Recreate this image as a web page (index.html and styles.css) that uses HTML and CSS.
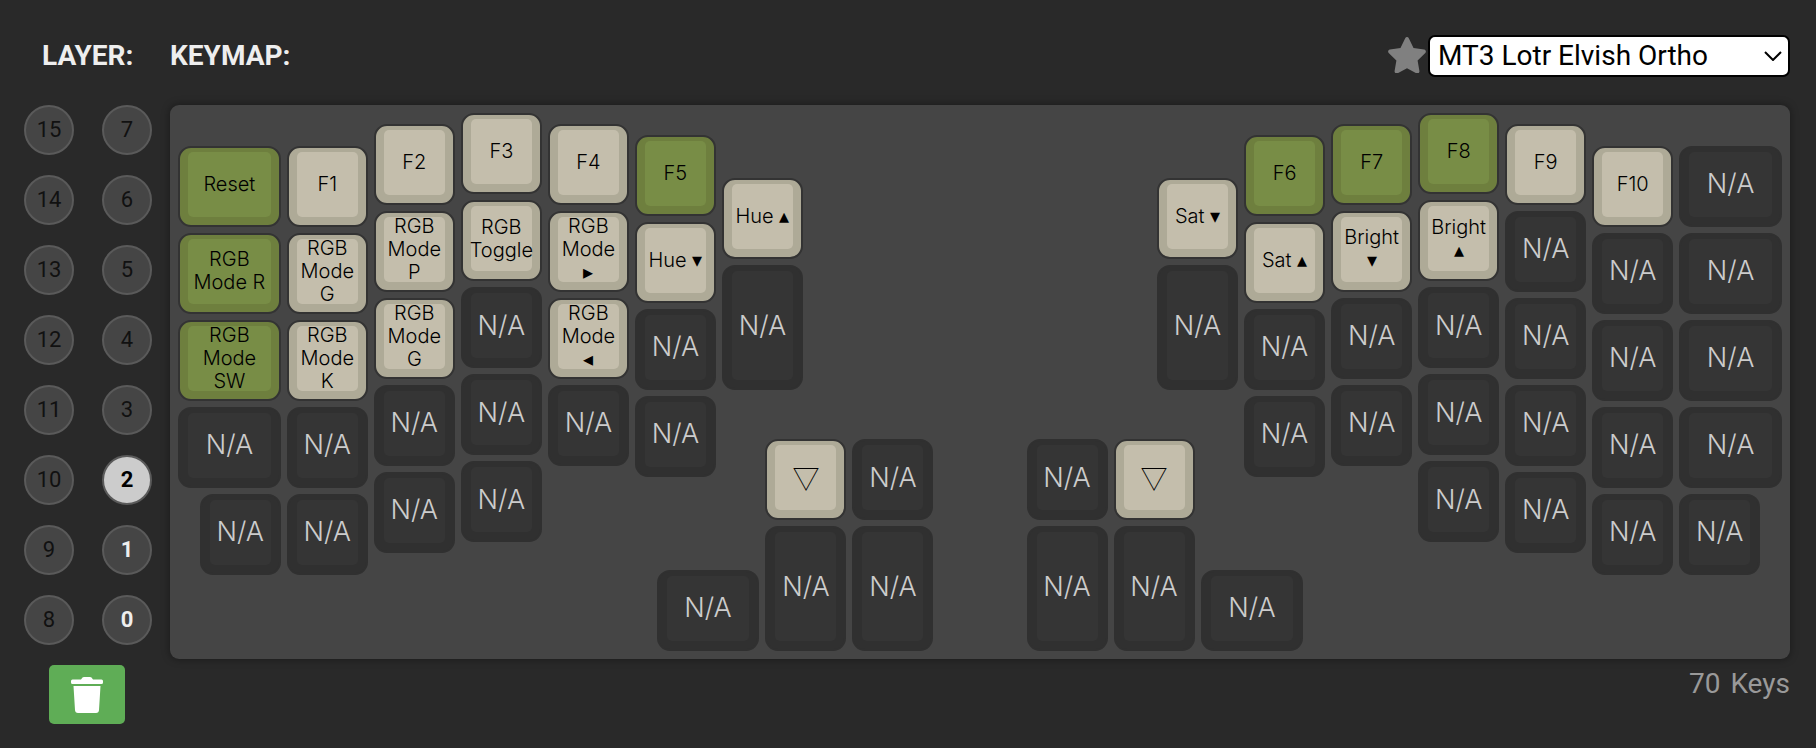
FILE: index.html
```html
<!DOCTYPE html>
<html lang="en">
<head>
<meta charset="utf-8">
<title>Keymap</title>
<link rel="stylesheet" href="styles.css">
</head>
<body>
<main class="configurator">
  <h2 class="title title-layer">Layer:</h2>
  <header class="keymap-head">
    <h2 class="title">Keymap:</h2>
    <div class="picker">
      <button class="favorite" type="button" aria-label="Favorite colorway">
        <svg viewBox="0 0 38 36" aria-hidden="true"><path d="M17.2 1.2c.7-1.500 2.900-1.500 3.600 0l4.700 9.700 10.600 1.600c1.700.3 2.400 2.300 1.200 3.500l-7.700 7.600 1.800 10.500c.3 1.700-1.500 2.900-3 2.200L19 31.300l-9.400 5c-1.500.7-3.300-.5-3-2.200l1.800-10.500L.700 16c-1.200-1.200-.5-3.200 1.200-3.500l10.600-1.600z"/></svg>
      </button>
      <div class="select-box">
        <select class="colorway" aria-label="Colorway">
          <option>MT3 Lotr Elvish Ortho</option>
        </select>
        <svg class="chevron" viewBox="0 0 18 10" aria-hidden="true"><path d="M1 1l8 8 8-8"/></svg>
      </div>
    </div>
  </header>

  <aside class="layers">
    <div class="layer-grid">
      <button type="button" class="layer">15</button><button type="button" class="layer">7</button>
      <button type="button" class="layer">14</button><button type="button" class="layer">6</button>
      <button type="button" class="layer">13</button><button type="button" class="layer">5</button>
      <button type="button" class="layer">12</button><button type="button" class="layer">4</button>
      <button type="button" class="layer">11</button><button type="button" class="layer">3</button>
      <button type="button" class="layer">10</button><button type="button" class="layer active">2</button>
      <button type="button" class="layer">9</button><button type="button" class="layer used">1</button>
      <button type="button" class="layer">8</button><button type="button" class="layer used">0</button>
    </div>
    <button class="clear" type="button" aria-label="Clear layer">
      <svg viewBox="0 0 32 36" aria-hidden="true"><path d="M1.500 2.500H10L11.500.500Q12 0 13 0h6q1 0 1.500.500L22 2.500h8.500Q32 2.500 32 4v1.500Q32 7 30.500 7h-29Q0 7 0 5.500V4Q0 2.500 1.500 2.500z"/><path d="M2.500 9h27L28 33q-.2 3-3 3H7q-2.800 0-3-3z"/></svg>
    </button>
  </aside>

  <section class="keymap">
    <div class="board"><div class="keys" id="keys"></div></div>
    <p class="count"><span>70</span><span>Keys</span></p>
  </section>
</main>
<script src="keys.js"></script>
</body>
</html>
```
FILE: styles.css
```css
* {
  box-sizing: border-box;
}

body {
  margin: 0;
  background: #292929;
  color: #eee;
  font-family: Roboto, "Liberation Sans", sans-serif;
  font-size: 28px;
  line-height: 32px;
}

button {
  font: inherit;
  color: inherit;
  cursor: pointer;
}

.configurator {
  display: grid;
  grid-template-columns: 128px minmax(0, 1fr);
  column-gap: 18px;
  row-gap: 28px;
  padding: 35px 26px 24px 24px;
}

.title {
  margin: 0;
  font-size: 28px;
  font-weight: 700;
  text-transform: uppercase;
}

.title-layer {
  align-self: center;
  padding-left: 18px;
}

.keymap-head,
.picker {
  display: flex;
  align-items: center;
}

.keymap-head {
  justify-content: space-between;
}

.picker {
  gap: 2px;
}

.favorite {
  display: flex;
  padding: 0;
  border: 0;
  background: none;
}

.favorite svg {
  width: 38px;
  height: 36px;
  margin-bottom: 2px;
  fill: #808080;
}

.select-box {
  display: grid;
  align-items: center;
  width: 362px;
}

.colorway,
.chevron {
  grid-area: 1 / 1;
}

.colorway {
  appearance: none;
  width: 100%;
  height: 42px;
  padding: 0 32px 0 8px;
  border: 2px solid #000;
  border-radius: 7px;
  background: #fff;
  color: #000;
  font: inherit;
}

.chevron {
  justify-self: end;
  width: 18px;
  height: 10px;
  margin-right: 8px;
  fill: none;
  stroke: #000;
  stroke-width: 2;
  pointer-events: none;
}

.layers {
  display: flex;
  flex-direction: column;
  gap: 20px;
}

.layer-grid {
  display: grid;
  grid-template-columns: 50px 50px;
  justify-content: space-between;
  row-gap: 20px;
}

.layer {
  height: 50px;
  padding: 0;
  border: 2px solid #5a5a5a;
  border-radius: 50%;
  background: #454545;
  color: #111;
  font-size: 22px;
  line-height: 26px;
}

.layer.used {
  color: #eee;
  font-weight: 700;
}

.layer.active {
  background: #ccc;
  color: #000;
  font-weight: 700;
}

.clear {
  display: flex;
  align-items: center;
  justify-content: center;
  width: 76px;
  height: 59px;
  margin-left: 25px;
  padding: 0;
  border: 0;
  border-radius: 5px;
  background: #5fad56;
}

.clear svg {
  width: 32px;
  height: 36px;
  fill: #fff;
}

.board {
  padding: 5px;
  border-radius: 9px;
  background: #454545;
  box-shadow: 0 0 8px rgba(0, 0, 0, 0.4);
}

.keys {
  display: grid;
  grid-template-columns: repeat(74, minmax(0, 1fr));
  grid-template-rows: repeat(50, minmax(0, 1fr));
  aspect-ratio: 74 / 25;
}

.key {
  display: flex;
  min-width: 0;
  min-height: 0;
  margin: 3px;
  padding: 4px 8px 8px;
  border: 2px solid #303030;
  border-radius: 13px;
  background: #303030;
  color: #ccc;
  font-family: Inter, "Open Sans", sans-serif;
  font-size: 27px;
  font-weight: 300;
  line-height: 32px;
}

.face {
  display: flex;
  flex: 1;
  align-items: center;
  justify-content: center;
  min-width: 0;
  border-radius: 5px;
  background: #353535;
  white-space: pre;
}

.key.mod,
.key.alpha {
  border-color: #333;
  color: #000;
  font-size: 20px;
  line-height: 23px;
}

.key.mod {
  background: #6e7f3e;
}

.key.mod .face {
  background: #788d46;
}

.key.alpha {
  background: #aeaa97;
}

.key.alpha .face {
  background: #c4beac;
}

.key.symbol {
  font-family: "Noto Sans CJK JP", sans-serif;
  font-size: 27px;
}

.count {
  display: flex;
  justify-content: flex-end;
  gap: 10px;
  margin: 9px 0 0;
  color: #999;
}
```
FILE: keys.js
```js
// Each key: [x, y, width, height, label, kind], in key units.
const NA = "N/A";
const keys = [
  [0, 0.375, 1.25, 1, "Reset", "mod"],
  [0, 1.375, 1.25, 1, "RGB\nMode R", "mod"],
  [0, 2.375, 1.25, 1, "RGB\nMode\nSW", "mod"],
  [0, 3.375, 1.25, 1, NA],
  [0.25, 4.375, 1, 1, NA],
  [1.25, 0.375, 1, 1, "F1", "alpha"],
  [1.25, 1.375, 1, 1, "RGB\nMode\nG", "alpha"],
  [1.25, 2.375, 1, 1, "RGB\nMode\nK", "alpha"],
  [1.25, 3.375, 1, 1, NA],
  [1.25, 4.375, 1, 1, NA],
  [2.25, 0.125, 1, 1, "F2", "alpha"],
  [2.25, 1.125, 1, 1, "RGB\nMode\nP", "alpha"],
  [2.25, 2.125, 1, 1, "RGB\nMode\nG", "alpha"],
  [2.25, 3.125, 1, 1, NA],
  [2.25, 4.125, 1, 1, NA],
  [3.25, 0, 1, 1, "F3", "alpha"],
  [3.25, 1, 1, 1, "RGB\nToggle", "alpha"],
  [3.25, 2, 1, 1, NA],
  [3.25, 3, 1, 1, NA],
  [3.25, 4, 1, 1, NA],
  [4.25, 0.125, 1, 1, "F4", "alpha"],
  [4.25, 1.125, 1, 1, "RGB\nMode\n▸", "alpha"],
  [4.25, 2.125, 1, 1, "RGB\nMode\n◂", "alpha"],
  [4.25, 3.125, 1, 1, NA],
  [5.25, 0.25, 1, 1, "F5", "mod"],
  [5.25, 1.25, 1, 1, "Hue ▾", "alpha"],
  [5.25, 2.25, 1, 1, NA],
  [5.25, 3.25, 1, 1, NA],
  [6.25, 0.75, 1, 1, "Hue ▴", "alpha"],
  [6.25, 1.75, 1, 1.5, NA],
  [6.75, 3.75, 1, 1, "▽", "alpha symbol"],
  [7.75, 3.75, 1, 1, NA],
  [5.5, 5.25, 1.25, 1, NA],
  [6.75, 4.75, 1, 1.5, NA],
  [7.75, 4.75, 1, 1.5, NA],
  [9.75, 3.75, 1, 1, NA],
  [10.75, 3.75, 1, 1, "▽", "alpha symbol"],
  [9.75, 4.75, 1, 1.5, NA],
  [10.75, 4.75, 1, 1.5, NA],
  [11.75, 5.25, 1.25, 1, NA],
  [11.25, 0.75, 1, 1, "Sat ▾", "alpha"],
  [11.25, 1.75, 1, 1.5, NA],
  [12.25, 0.25, 1, 1, "F6", "mod"],
  [12.25, 1.25, 1, 1, "Sat ▴", "alpha"],
  [12.25, 2.25, 1, 1, NA],
  [12.25, 3.25, 1, 1, NA],
  [13.25, 0.125, 1, 1, "F7", "mod"],
  [13.25, 1.125, 1, 1, "Bright\n▾", "alpha"],
  [13.25, 2.125, 1, 1, NA],
  [13.25, 3.125, 1, 1, NA],
  [14.25, 0, 1, 1, "F8", "mod"],
  [14.25, 1, 1, 1, "Bright\n▴", "alpha"],
  [14.25, 2, 1, 1, NA],
  [14.25, 3, 1, 1, NA],
  [14.25, 4, 1, 1, NA],
  [15.25, 0.125, 1, 1, "F9", "alpha"],
  [15.25, 1.125, 1, 1, NA],
  [15.25, 2.125, 1, 1, NA],
  [15.25, 3.125, 1, 1, NA],
  [15.25, 4.125, 1, 1, NA],
  [16.25, 0.375, 1, 1, "F10", "alpha"],
  [16.25, 1.375, 1, 1, NA],
  [16.25, 2.375, 1, 1, NA],
  [16.25, 3.375, 1, 1, NA],
  [16.25, 4.375, 1, 1, NA],
  [17.25, 0.375, 1.25, 1, NA],
  [17.25, 1.375, 1.25, 1, NA],
  [17.25, 2.375, 1.25, 1, NA],
  [17.25, 3.375, 1.25, 1, NA],
  [17.25, 4.375, 1, 1, NA],
];

const board = document.getElementById("keys");
for (const [x, y, w, h, label, kind] of keys) {
  const key = document.createElement("button");
  key.type = "button";
  key.className = kind ? `key ${kind}` : "key";
  // Grid tracks are a quarter unit wide and an eighth of a unit tall.
  key.style.gridColumn = `${x * 4 + 1} / span ${w * 4}`;
  key.style.gridRow = `${y * 8 + 1} / span ${h * 8}`;
  const face = document.createElement("span");
  face.className = "face";
  face.textContent = label;
  key.append(face);
  board.append(key);
}
```
